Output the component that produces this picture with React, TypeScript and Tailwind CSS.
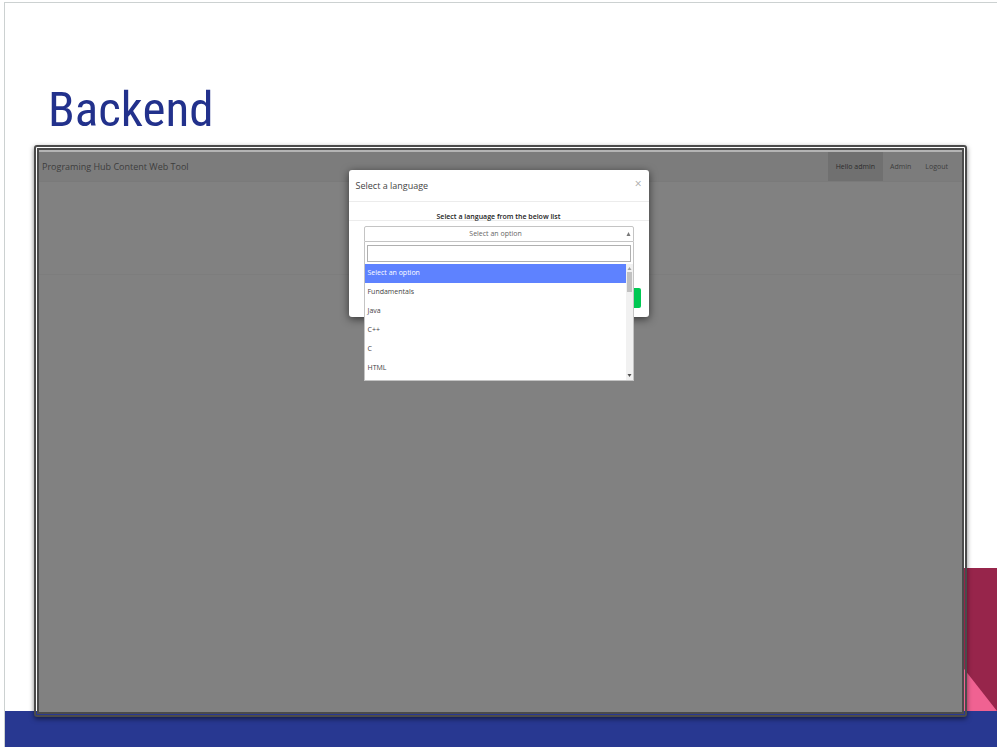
import { useState } from "react"

const LANGUAGES = ["Select an option", "Fundamentals", "Java", "C++", "C", "HTML"]

function SlideDecor() {
  return (
    <div className="absolute inset-0 -z-10 flex flex-col justify-end">
      <svg className="h-[143px] w-9 self-end" viewBox="0 0 36 143" preserveAspectRatio="none">
        <rect width="36" height="143" fill="#97254b" />
        <path d="M0 97 L36 143 H0 Z" fill="#f06292" />
      </svg>
      <div className="h-9 bg-[#283891]" />
    </div>
  )
}

function NavBar() {
  return (
    <header className="flex items-center justify-between border-t-2 border-[#b4b4b4] border-b border-b-[#7a7a7a] bg-[#7c7c7c] px-[3px] font-['Open_Sans',sans-serif] text-[#3c3c3c]">
      <span className="text-[9px]">Programing Hub Content Web Tool</span>
      <nav className="flex pr-1 text-[7px] leading-[29px]">
        <a href="#home" className="bg-[#707070] px-2 font-medium text-[#2c2c2c]">
          Hello admin
        </a>
        <a href="#admin" className="px-[7px]">
          Admin
        </a>
        <a href="#logout" className="px-[7px]">
          Logout
        </a>
      </nav>
    </header>
  )
}

function ScrollBar() {
  return (
    <div className="flex w-[7px] flex-col items-center bg-[#f1f1f1]">
      <svg className="h-2 w-[5px]" viewBox="0 0 5 8">
        <path d="M2.5 3 L4.5 6 H0.5 Z" fill="#a3a3a3" />
      </svg>
      <div className="h-5 w-[5px] bg-[#c1c1c1]" />
      <svg className="mt-auto h-2 w-[5px]" viewBox="0 0 5 8">
        <path d="M0.5 2 H4.5 L2.5 5 Z" fill="#505050" />
      </svg>
    </div>
  )
}

function LanguagePicker() {
  const [selected, setSelected] = useState(LANGUAGES[0])
  const [query, setQuery] = useState("")

  return (
    <div className="relative">
      <select
        aria-labelledby="language-label"
        value={selected}
        onChange={(e) => setSelected(e.target.value)}
        className="block h-4 w-full appearance-none rounded-t-[2px] border border-[#c4c4c4] bg-white pr-[6px] pt-px text-center text-[7px] text-[#666]"
      >
        {LANGUAGES.map((name) => (
          <option key={name}>{name}</option>
        ))}
      </select>
      <svg className="absolute right-[3px] top-[6px] h-1 w-[5px]" viewBox="0 0 5 4">
        <path d="M2.5 0 L4.5 4 H0.5 Z" fill="#777" />
      </svg>

      <div className="absolute inset-x-0 top-full border border-t-0 border-[#c4c4c4] bg-white">
        <div className="px-[2px] pb-[2px] pt-[3px]">
          <input
            type="text"
            aria-label="Search languages"
            value={query}
            onChange={(e) => setQuery(e.target.value)}
            className="block h-[17px] w-full border border-[#b0b0b0] px-1 text-[7px] outline-none"
          />
        </div>
        <div className="flex h-[116px]">
          <ul role="listbox" aria-labelledby="language-label" className="flex-1 overflow-hidden text-[7px]">
            {LANGUAGES.map((name) => (
              <li
                key={name}
                role="option"
                aria-selected={selected === name}
                onClick={() => setSelected(name)}
                className={`h-[19px] px-[3px] leading-[18px] ${
                  selected === name ? "bg-[#5e82ff] text-white" : "text-[#444]"
                }`}
              >
                {name}
              </li>
            ))}
          </ul>
          <ScrollBar />
        </div>
      </div>
    </div>
  )
}

function LanguageDialog() {
  return (
    <div className="absolute inset-0 flex items-start justify-center pr-1 pt-5">
      <section
        role="dialog"
        aria-labelledby="dialog-title"
        className="w-[300px] rounded-[3px] bg-white font-['Open_Sans',sans-serif] shadow-[0_2px_8px_rgba(0,0,0,0.6)]"
      >
        <div className="flex h-8 items-center justify-between border-b border-[#ececec] px-[7px]">
          <h2 id="dialog-title" className="pt-px text-[9px] text-[#444]">
            Select a language
          </h2>
          <button aria-label="Close" className="pb-[3px] text-[12px] leading-none text-[#aaa]">
            ×
          </button>
        </div>
        <div className="px-[15px] pt-2">
          <p id="language-label" className="text-center text-[7px] font-semibold leading-[14px] text-[#222]">
            Select a language from the below list
          </p>
        </div>
        <div className="-mt-1 border-t border-[#ececec] px-[15px] pt-[5px]">
          <LanguagePicker />
        </div>
        <div className="flex justify-end px-2 pb-[9px] pt-[46px]">
          <button className="h-5 rounded-[2px] bg-[#00c853] px-[7px] text-[7px] text-white">Go</button>
        </div>
      </section>
    </div>
  )
}

export default function App() {
  return (
    <div className="h-screen bg-white pb-[3px] pl-1 pr-[3px] pt-[2px]">
      <main className="relative isolate flex h-full flex-col border-l border-t border-[#ccd1d1] pb-[30px] pl-[29px] pr-[30px]">
        <SlideDecor />
        <h1 className="pl-[14px] pt-[72px] font-['Roboto_Condensed',Roboto,sans-serif] text-[49px] leading-[70px] text-[#22318c]">
          Backend
        </h1>
        <div className="relative flex-1 rounded-[3px] border-[5px] border-double border-[#4b4b4b] bg-[#818181] bg-clip-padding shadow-[0_2px_5px_rgba(0,0,0,0.5)]">
          <NavBar />
          <div className="h-[93px] border-b border-[#7d7d7d]" />
          <LanguageDialog />
        </div>
      </main>
    </div>
  )
}
